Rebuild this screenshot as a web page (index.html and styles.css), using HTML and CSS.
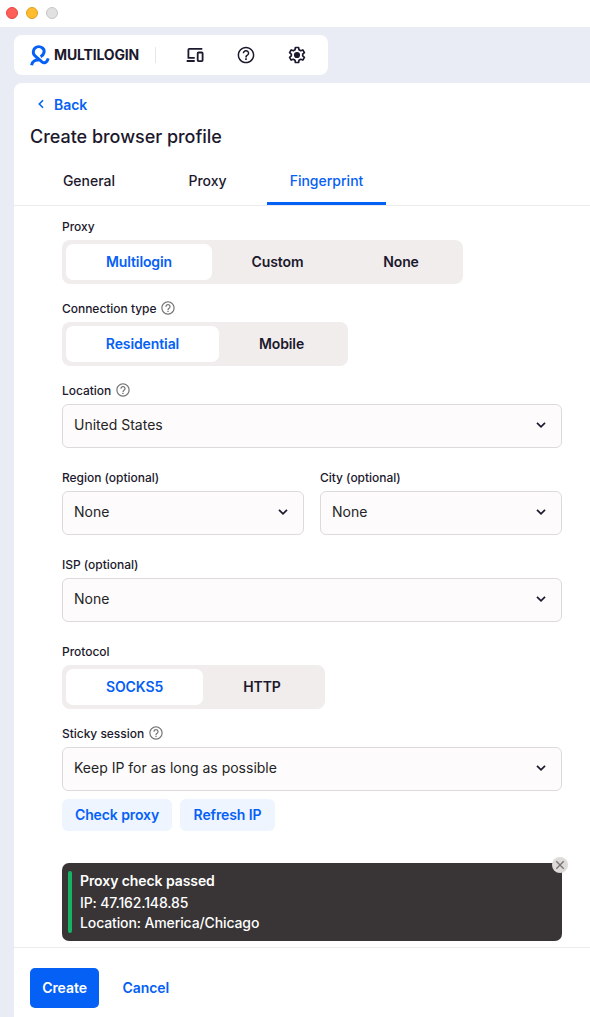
FILE: index.html
```html
<!DOCTYPE html>
<html lang="en">
<head>
<meta charset="utf-8">
<title>Create browser profile</title>
<link rel="stylesheet" href="styles.css">
</head>
<body>
<svg width="0" height="0" class="defs">
  <symbol id="help" viewBox="0 0 24 24"><path d="M11 18h2v-2h-2v2zm1-16C6.480 2 2 6.480 2 12s4.480 10 10 10 10-4.480 10-10S17.520 2 12 2zm0 18.200c-4.530 0-8.200-3.670-8.200-8.200S7.470 3.800 12 3.800s8.200 3.670 8.200 8.200-3.670 8.200-8.200 8.200zM12 6c-2.210 0-4 1.790-4 4h1.800c0-1.200 1-2.200 2.200-2.200s2.200 1 2.200 2.200c0 2-3.100 1.750-3.100 5h1.800c0-2.250 3.100-2.500 3.100-5 0-2.210-1.790-4-4-4z"/></symbol>
  <symbol id="chevron" viewBox="0 0 12 8"><path d="M2 1.800 6 5.800 10 1.800" fill="none" stroke="currentColor" stroke-width="1.700"/></symbol>
</svg>
<div class="titlebar"><i class="dot red"></i><i class="dot amber"></i><i class="dot grey"></i></div>
<header class="topbar">
  <svg class="logo" viewBox="0 0 20 21"><g fill="none" stroke="#0560f5" stroke-width="3"><path d="M10.600 11.700C14.500 9.600 15.200 5.200 12.500 3 10.300 1.300 6.900 1.400 4.900 3.200 2.600 5.400 2.800 9 5 10.900L12 16.900C14.300 18.700 17.200 17.500 18.200 13.400"/><path d="M9 15.100C5.500 14.800 2.100 16.200 1.600 20.300"/></g></svg>
  <span class="brand">MULTILOGIN</span>
  <i class="rule"></i>
  <svg class="tool devices" viewBox="0 0 20 18"><g fill="none" stroke="currentColor" stroke-width="1.800"><path d="M17.300 2.900H4.300Q3.400 2.900 3.400 3.800V11.800H9.700M1.700 15H9.700"/><rect x="12.700" y="6.500" width="4.900" height="8.600" rx=".8"/></g></svg>
  <svg class="tool help-tool"><use href="#help"/></svg>
  <svg class="tool gear" viewBox="0 0 24 24"><path d="M10.100 3h3.800l.5 2.700 2 1.150 2.600-.9 1.900 3.250-2.100 1.800v2l2.100 1.800-1.900 3.250-2.600-.9-2 1.150-.5 2.700h-3.800l-.5-2.700-2-1.150-2.600.9-1.900-3.250 2.100-1.800v-2l-2.100-1.800L5 5.950l2.600.9 2-1.150z" fill="none" stroke="currentColor" stroke-width="2" stroke-linejoin="round"/><circle cx="12" cy="12" r="3.700" fill="currentColor"/></svg>
</header>
<main class="panel">
  <a class="back"><svg viewBox="0 0 8 10"><path d="M6 1.300 2.300 5 6 8.700" fill="none" stroke="currentColor" stroke-width="1.600"/></svg><span>Back</span></a>
  <h1>Create browser profile</h1>
  <nav class="tabs"><span class="tab general">General</span><span class="tab proxy">Proxy</span><span class="tab active">Fingerprint</span></nav>
  <form class="form">
    <div class="label"><span>Proxy</span></div>
    <div class="segments"><span class="seg on w146">Multilogin</span><span class="seg w131">Custom</span><span class="seg w116">None</span></div>
    <div class="label near"><span>Connection type</span><svg><use href="#help"/></svg></div>
    <div class="segments"><span class="seg on w153">Residential</span><span class="seg w125">Mobile</span></div>
    <div class="label near"><span>Location</span><svg><use href="#help"/></svg></div>
    <div class="select">United States<svg><use href="#chevron"/></svg></div>
    <div class="pair">
      <div><div class="label far"><span>Region (optional)</span></div><div class="select">None<svg><use href="#chevron"/></svg></div></div>
      <div><div class="label far"><span>City (optional)</span></div><div class="select">None<svg><use href="#chevron"/></svg></div></div>
    </div>
    <div class="label far"><span>ISP (optional)</span></div>
    <div class="select">None<svg><use href="#chevron"/></svg></div>
    <div class="label far"><span>Protocol</span></div>
    <div class="segments"><span class="seg on w137">SOCKS5</span><span class="seg w118">HTTP</span></div>
    <div class="label near"><span>Sticky session</span><svg><use href="#help"/></svg></div>
    <div class="select">Keep IP for as long as possible<svg><use href="#chevron"/></svg></div>
    <div class="actions"><span class="soft check">Check proxy</span><span class="soft refresh">Refresh IP</span></div>
    <div class="toast">
      <i class="bar"></i>
      <div class="message"><strong>Proxy check passed</strong><span>IP: 47.162.148.85</span><span>Location: America/Chicago</span></div>
      <svg class="close" viewBox="0 0 16 16"><circle cx="8" cy="8" r="8" fill="#dedada"/><path d="M4.300 4.300 11.700 11.700M11.700 4.300 4.300 11.700" stroke="#767272" stroke-width="1.300"/></svg>
    </div>
  </form>
  <footer class="footer"><span class="create">Create</span><span class="cancel">Cancel</span></footer>
</main>
</body>
</html>
```
FILE: styles.css
```css
* { box-sizing: border-box; }
body { margin: 0; width: 590px; height: 1017px; overflow: hidden; background: #e9ecf4; color: #1c182d; font-family: Inter, sans-serif; font-size: 14px; display: flex; flex-direction: column; }
.defs { position: absolute; }
svg { display: block; flex: none; fill: currentColor; }
.titlebar { height: 27px; flex: none; background: #fff; display: flex; align-items: center; gap: 8px; padding: 0 0 1px 6px; }
.dot { width: 12px; height: 12px; border-radius: 50%; border: 1px solid; }
.red { background: #ff5f57; border-color: #e14640; }
.amber { background: #febc2e; border-color: #dfa023; }
.grey { background: #e1e1e1; border-color: #c7c7c7; }
.topbar { margin: 8px 0 8px 14px; width: 314px; height: 40px; flex: none; background: #fff; border-radius: 8px; display: flex; align-items: center; padding-left: 16px; }
.logo { width: 20px; height: 21px; }
.brand { width: 86px; margin-left: 4px; padding-bottom: 1px; font-size: 14px; font-weight: 700; letter-spacing: -.15px; white-space: nowrap; }
.rule { width: 1px; height: 16px; margin-left: 15px; background: #e7e5e8; }
.tool { width: 20px; height: 20px; }
.devices { height: 18px; margin-left: 29px; }
.help-tool { margin-left: 31px; }
.gear { margin-left: 30.5px; }
.panel { flex: 1; margin-left: 14px; background: #fff; border-radius: 8px 0 0 0; display: flex; flex-direction: column; min-height: 0; }
.back { height: 44px; display: flex; align-items: center; padding: 0 0 2px 23px; color: #0560f5; font-weight: 600; letter-spacing: -.05px; }
.back svg { width: 8px; height: 10px; margin-right: 9px; }
h1 { margin: 0 0 0 16px; height: 20px; line-height: 20px; font-size: 18px; font-weight: 500; letter-spacing: -.03px; }
.tabs { height: 59px; border-bottom: 1px solid #ececec; display: flex; align-items: flex-start; }
.tab { height: 58px; padding-top: 12px; line-height: 44px; text-align: center; font-weight: 500; }
.general { width: 150px; }
.proxy { width: 87px; }
.active { width: 119px; margin-left: 16px; color: #0560f5; border-bottom: 3px solid #0560f5; }
.form { width: 500px; margin: 8px 0 0 48px; }
.label { height: 26px; padding-bottom: 2px; display: flex; align-items: center; gap: 4px; font-size: 12px; font-weight: 500; letter-spacing: -.03px; }
.label svg { width: 16px; height: 16px; color: #757575; }
.near { margin-top: 12px; }
.far { margin-top: 17px; }
.segments { width: fit-content; height: 44px; padding: 4px; display: flex; border-radius: 8px; background: #f0edec; }
.seg { padding-bottom: 2px; display: flex; align-items: center; justify-content: center; border-radius: 7px; font-weight: 600; letter-spacing: -.1px; white-space: nowrap; }
.on { background: #fff; color: #0560f5; }
.w146 { width: 146px; }
.w131 { width: 131px; }
.w116 { width: 116px; }
.w153 { width: 153px; }
.w125 { width: 125px; }
.w137 { width: 137px; }
.w118 { width: 118px; }
.select { height: 44px; padding: 0 14px 3px 11px; display: flex; align-items: center; justify-content: space-between; border: 1px solid #dedada; border-radius: 6px; background: #fdfbfc; color: #242424; }
.select svg { width: 12px; height: 8px; color: #1c182d; }
.pair { display: grid; grid-template-columns: 1fr 1fr; gap: 16px; }
.actions { display: flex; gap: 8px; margin-top: 8px; }
.soft { height: 32px; padding-bottom: 2px; display: flex; align-items: center; justify-content: center; border-radius: 6px; background: #eef5ff; color: #0560f5; font-weight: 600; letter-spacing: -.1px; }
.check { width: 110px; }
.refresh { width: 95px; }
.toast { position: relative; height: 78px; margin-top: 32px; padding: 8px 6px; display: flex; border-radius: 7px; background: #393536; color: #fff; }
.bar { width: 4px; height: 62px; border-radius: 2px; background: #16b364; }
.message { margin: -1px 0 0 8px; display: flex; flex-direction: column; font-weight: 500; line-height: 21px; letter-spacing: -.12px; }
.message strong { font-weight: 600; letter-spacing: -.08px; line-height: 22px; height: 22px; margin-bottom: 0; }
.message span:last-child { line-height: 20px; }
.close { position: absolute; right: -6px; top: -6px; width: 16px; height: 16px; }
.footer { height: 70px; margin-top: 6px; flex: none; border-top: 1px solid #ececec; display: flex; align-items: flex-start; padding: 20px 0 0 16px; font-weight: 600; line-height: 40px; letter-spacing: -.07px; }
.create { width: 69px; height: 40px; text-align: center; color: #fff; background: #0560f5; border-radius: 5px; }
.cancel { margin-left: 23.5px; color: #0560f5; }
```
